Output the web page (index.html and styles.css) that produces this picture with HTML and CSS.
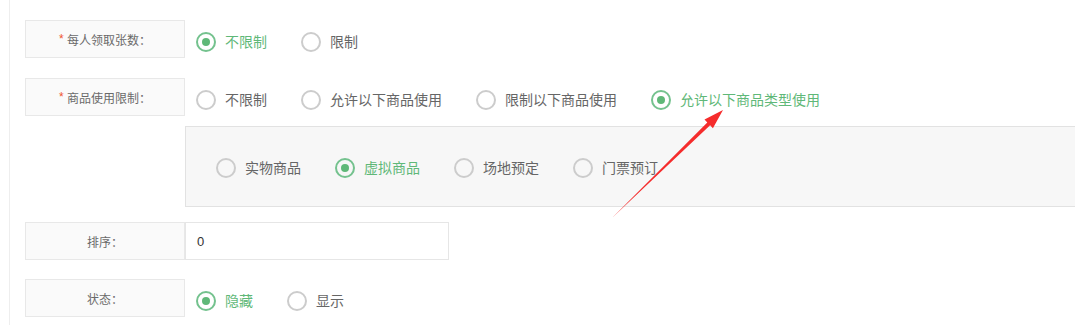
FILE: index.html
```html
<!DOCTYPE html>
<html lang="zh-CN">
<head>
<meta charset="utf-8">
<title>优惠券设置</title>
<link rel="stylesheet" href="styles.css">
</head>
<body>
<div class="page">
  <div class="item row-first">
    <div class="label"><span class="req">*</span>&nbsp;每人领取张数：</div>
    <div class="options">
      <span class="opt checked"><i class="dot"></i><span class="txt">不限制</span></span>
      <span class="opt"><i class="dot"></i><span class="txt">限制</span></span>
    </div>
  </div>

  <div class="item row-second">
    <div class="label"><span class="req">*</span>&nbsp;商品使用限制：</div>
    <div class="options">
      <span class="opt"><i class="dot"></i><span class="txt">不限制</span></span>
      <span class="opt"><i class="dot"></i><span class="txt">允许以下商品使用</span></span>
      <span class="opt"><i class="dot"></i><span class="txt">限制以下商品使用</span></span>
      <span class="opt checked"><i class="dot"></i><span class="txt">允许以下商品类型使用</span></span>
    </div>
  </div>

  <div class="panel">
    <span class="opt"><i class="dot"></i><span class="txt">实物商品</span></span>
    <span class="opt checked"><i class="dot"></i><span class="txt">虚拟商品</span></span>
    <span class="opt"><i class="dot"></i><span class="txt">场地预定</span></span>
    <span class="opt"><i class="dot"></i><span class="txt">门票预订</span></span>
  </div>

  <div class="item row-sort">
    <div class="label">排序：</div>
    <div class="input">0</div>
  </div>

  <div class="item row-status">
    <div class="label">状态：</div>
    <div class="options">
      <span class="opt checked"><i class="dot"></i><span class="txt">隐藏</span></span>
      <span class="opt"><i class="dot"></i><span class="txt">显示</span></span>
    </div>
  </div>
</div>

<svg class="arrow" width="1075" height="325" viewBox="0 0 1075 325" xmlns="http://www.w3.org/2000/svg">
  <polygon points="612,218 707.3,122.5 704.5,119.6 723,110 712.9,128.2 710.1,125.3" fill="#f52c2c"/>
</svg>
</body>
</html>
```

FILE: styles.css
```css
html, body {
  margin: 0;
  padding: 0;
}

body {
  width: 1075px;
  height: 325px;
  overflow: hidden;
  position: relative;
  background: #ffffff;
  font-family: "Liberation Sans", "Noto Sans CJK SC", sans-serif;
  color: #666666;
}

.page {
  margin-left: 9px;
  border-left: 1px solid #eeeeee;
  padding: 20px 0 0 15px;
  height: 325px;
  box-sizing: border-box;
}

.item {
  display: flex;
  align-items: flex-start;
}

.row-first {
  margin-bottom: 20px;
}

.row-second {
  margin-bottom: 10px;
}

.row-sort {
  margin-top: 15px;
  margin-bottom: 19px;
}

.label {
  width: 160px;
  height: 38px;
  box-sizing: border-box;
  border: 1px solid #e8e8e8;
  background: #fafafa;
  display: flex;
  align-items: center;
  justify-content: center;
  font-size: 12px;
  color: #6a6a6a;
  flex-shrink: 0;
}

.req {
  color: #f0542c;
}

.options {
  display: flex;
  align-items: center;
  margin-top: 12px;
  padding-left: 11px;
}

.opt {
  display: flex;
  align-items: center;
  margin-right: 34px;
}

.dot {
  width: 20px;
  height: 20px;
  box-sizing: border-box;
  border: 2px solid #cccccc;
  border-radius: 50%;
  display: flex;
  align-items: center;
  justify-content: center;
  flex-shrink: 0;
}

.txt {
  margin-left: 9px;
  font-size: 14px;
  line-height: 20px;
  color: #666666;
}

.checked .dot {
  border-color: #74c28e;
}

.checked .dot::after {
  content: "";
  width: 8px;
  height: 8px;
  border-radius: 50%;
  background: #5fb878;
}

.checked .txt {
  color: #5fb878;
}

.panel {
  margin-left: 160px;
  margin-right: -4px;
  height: 81px;
  box-sizing: border-box;
  border: 1px solid #e2e2e2;
  background: #f7f7f7;
  display: flex;
  align-items: flex-start;
  padding: 31px 0 0 30px;
}

.input {
  width: 264px;
  height: 38px;
  box-sizing: border-box;
  border: 1px solid #e6e6e6;
  background: #ffffff;
  padding-left: 11px;
  display: flex;
  align-items: center;
  font-size: 13px;
  color: #333333;
}

.arrow {
  position: absolute;
  left: 0;
  top: 0;
  pointer-events: none;
}
```
